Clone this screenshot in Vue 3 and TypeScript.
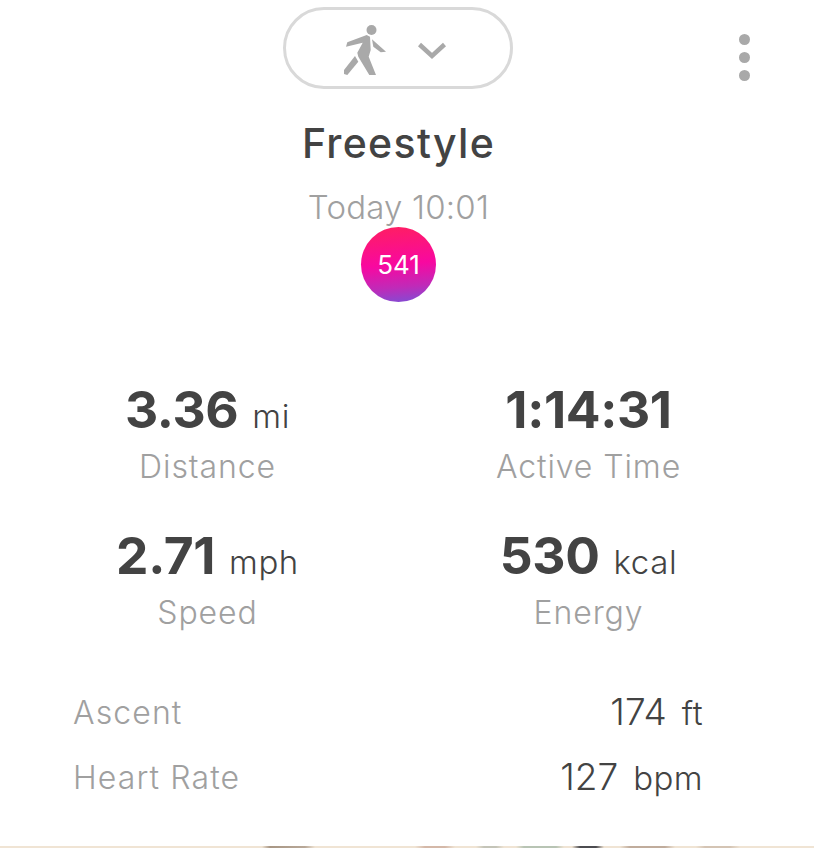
<script setup lang="ts">
const stats = [
  { value: '3.36', unit: 'mi', label: 'Distance' },
  { value: '1:14:31', unit: '', label: 'Active Time' },
  { value: '2.71', unit: 'mph', label: 'Speed' },
  { value: '530', unit: 'kcal', label: 'Energy' }
];
const rows = [
  { label: 'Ascent', value: '174', unit: 'ft' },
  { label: 'Heart Rate', value: '127', unit: 'bpm' }
];
</script>

<template>
  <div class="page">
    <header class="top">
      <button class="picker">
        <svg class="walker" width="43" height="51" viewBox="344 25 43 51">
          <circle cx="371.5" cy="30" r="5" fill="#a9a9a9" />
          <path d="M346 46.7 L347.3 42.3 L366.7 35 L370 36.7 L370.7 50 L368.7 56.7 L376 75 L369.3 75 L358.3 56.7 L357.3 52.7 L362.7 42.7 Z" fill="#a9a9a9" />
          <path d="M372 39.3 L386 51.7 L380.7 52.3 L373.3 46.7 Z" fill="#a9a9a9" />
          <path d="M355 56 L358.3 61.7 L347.3 75 L344 74 L344 70 Z" fill="#a9a9a9" />
        </svg>
        <svg class="chev" width="30" height="18" viewBox="0 0 30 18">
          <path d="M2.5 2.5 L15 14 L27.5 2.5" fill="none" stroke="#a9a9a9" stroke-width="4.5" />
        </svg>
      </button>
      <div class="dots"><i></i><i></i><i></i></div>
    </header>

    <h1 class="title">Freestyle</h1>
    <div class="date">Today 10:01</div>
    <div class="score">541</div>

    <section class="stats">
      <div v-for="s in stats" :key="s.label" class="stat">
        <div class="stat-value"><b>{{ s.value }}</b><span v-if="s.unit">{{ s.unit }}</span></div>
        <div class="stat-label">{{ s.label }}</div>
      </div>
    </section>

    <section class="rows">
      <div v-for="r in rows" :key="r.label" class="row">
        <span class="row-label">{{ r.label }}</span>
        <span class="row-value">{{ r.value }}<small>{{ r.unit }}</small></span>
      </div>
    </section>
    <div class="strip"></div>
  </div>
</template>

<style scoped>
.page {
  width: 814px;
  height: 848px;
  position: relative;
  overflow: hidden;
  background: #fff;
  font-family: Inter, Lato, sans-serif;
  color: #434343;
  display: flex;
  flex-direction: column;
  align-items: center;
}
.top {
  width: 100%;
  padding-top: 7px;
  height: 89px;
  box-sizing: border-box;
  display: flex;
  justify-content: center;
  position: relative;
}
.picker {
  width: 230px;
  height: 82px;
  margin-left: -18px;
  box-sizing: border-box;
  border: 3px solid #d9d9d9;
  border-radius: 41px;
  background: #fff;
  display: flex;
  align-items: center;
  justify-content: center;
  gap: 30px;
  padding: 5px 6px 0 0;
}
.dots {
  position: absolute;
  left: 739px;
  top: 34px;
  display: flex;
  flex-direction: column;
  gap: 7px;
}
.dots i {
  display: block;
  width: 11px;
  height: 11px;
  border-radius: 50%;
  background: #a9a9a9;
}
.title {
  margin: 28px 0 0 -17px;
  font-size: 41px;
  line-height: 52px;
  font-weight: 500;
  letter-spacing: 1.3px;
}
.date {
  margin: 18px 0 0 -17px;
  font-size: 33px;
  line-height: 40px;
  font-weight: 300;
  letter-spacing: 0.2px;
  color: #a0a0a0;
}
.score {
  width: 75px;
  height: 75px;
  margin: 0 0 0 -17px;
  border-radius: 50%;
  background: linear-gradient(175deg, #ff1f60 0%, #f808a0 50%, #c02ab8 78%, #7c4fd6 100%);
  color: #fff;
  font-size: 26px;
  font-weight: 400;
  display: flex;
  align-items: center;
  justify-content: center;
}
.stats {
  width: 762px;
  margin: 77px auto 0 17px;
  display: grid;
  grid-template-columns: 381px 381px;
  row-gap: 34px;
}
.stat { text-align: center; }
.stat-value { line-height: 60px; height: 60px; }
.stat-value b { font-size: 51.5px; font-weight: 700; letter-spacing: -0.4px; }
.stat-value span { font-size: 33px; margin-left: 14px; font-weight: 300; letter-spacing: 0.6px; }
.stat-label { margin-top: 4px; font-size: 32px; line-height: 48px; color: #a0a0a0; font-weight: 300; letter-spacing: 0.9px; }
.rows {
  width: 630px;
  margin: 43px 0 0 -38px;
}
.row {
  display: flex;
  justify-content: space-between;
  align-items: center;
  height: 65px;
}
.row-label { font-size: 32px; color: #a0a0a0; font-weight: 300; letter-spacing: 1.1px; }
.row-value { font-size: 37px; font-weight: 300; margin-bottom: 3px; }
.row-value small { font-size: 33px; margin-left: 15px; letter-spacing: 0.4px; }
.strip {
  position: absolute;
  left: 0;
  right: 0;
  bottom: 0;
  height: 2px;
  background: linear-gradient(90deg,
    #f0e4d4 262px, #a89684 270px, #b8a898 305px, #f0e4d4 315px,
    #f0e4d4 415px, #d4b8a8 425px, #d4b8a8 445px, #f0e4d4 455px,
    #f0e4d4 476px, #c4c4b8 484px, #c4c4b8 496px, #f0e4d4 504px,
    #f0e4d4 516px, #b8c4b4 524px, #b8c4b4 556px, #f0e4d4 564px,
    #f0e4d4 572px, #4c4c50 580px, #4c4c50 596px, #f0e4d4 604px,
    #f0e4d4 620px, #c0ac9c 630px, #c0ac9c 665px, #f0e4d4 675px,
    #f0e4d4 696px, #d4c4b4 705px, #d4c4b4 730px, #f0e4d4 740px);
}
</style>
